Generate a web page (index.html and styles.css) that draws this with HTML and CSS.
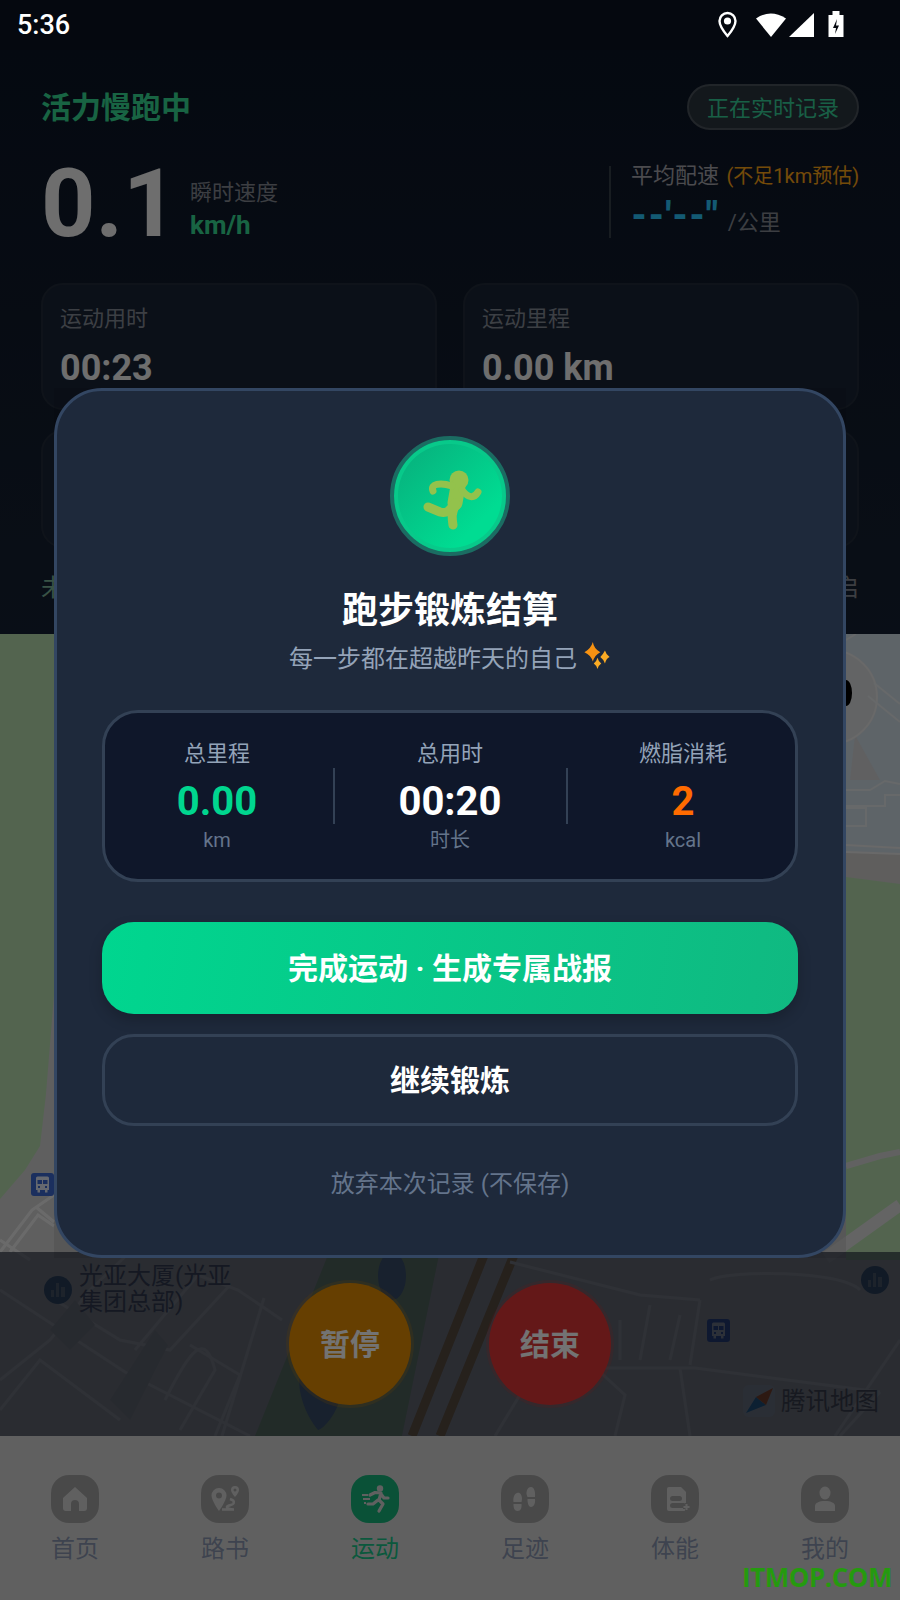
FILE: index.html
```html
<!DOCTYPE html>
<html lang="zh-CN">
<head>
    <meta charset="UTF-8">
    <meta name="viewport" content="width=device-width, initial-scale=1.0">
    <title>跑步锻炼结算</title>
    <link rel="stylesheet" href="styles.css">
</head>
<body>
    <div class="screen">
        <div class="status-bar">
            <span class="status-time">5:36</span>
            <svg class="status-icons" width="140" height="30" viewBox="0 0 140 30">
                <path d="M9.5 3a8 8 0 0 0-8 8c0 5.500 8 15 8 15s8-9.500 8-15a8 8 0 0 0-8-8z" fill="none" stroke="#fff" stroke-width="2.400"/>
                <circle cx="9.500" cy="11" r="3.600" fill="#fff"/>
                <path d="M38 8.500Q52.500-1.500 68 8.500L53 27z" fill="#fff"/>
                <path d="M96 3V27H71z" fill="#fff"/>
                <path d="M110.500 5h4V1h7v4h4v22h-15z" fill="#fff"/>
                <path d="M119 9l-4 9h3l-1 6 4-8.500h-3z" fill="#05080f"/>
            </svg>
        </div>

        <section class="panel">
            <div class="panel-head">
                <h1 class="panel-title">活力慢跑中</h1>
                <span class="live-pill">正在实时记录</span>
            </div>
            <div class="metrics">
                <span class="speed-value">0.1</span>
                <div class="speed-meta">
                    <span class="speed-label">瞬时速度</span>
                    <span class="speed-unit">km/h</span>
                </div>
                <div class="pace">
                    <div class="pace-label">平均配速 <span class="pace-note">(不足1km预估)</span></div>
                    <div class="pace-row"><span class="pace-value">--'--"</span><span class="pace-unit">/公里</span></div>
                </div>
            </div>
            <div class="cards">
                <div class="card">
                    <span class="card-label">运动用时</span>
                    <span class="card-value">00:23</span>
                </div>
                <div class="card">
                    <span class="card-label">运动里程</span>
                    <span class="card-value">0.00 km</span>
                </div>
                <div class="card"></div>
                <div class="card"></div>
            </div>
            <div class="panel-foot">
                <span class="foot-left">未</span>
                <span class="foot-right">启</span>
            </div>
        </section>

        <section class="map">
            <svg class="map-canvas" width="900" height="802" viewBox="0 634 900 802">
                <defs>
                    <g id="bus-stop">
                        <rect width="23" height="23" rx="3" fill="#3c68d0"/>
                        <path d="M5 5a1.500 1.500 0 0 1 1.500-1.500h10A1.500 1.500 0 0 1 18 5V17H16.500V19.500H14V17H9V19.500H6.500V17H5Z" fill="#dfe7f7"/>
                        <rect x="6.500" y="7" width="4.500" height="4" fill="#3c68d0"/>
                        <rect x="12" y="7" width="4.500" height="4" fill="#3c68d0"/>
                        <rect x="7" y="13" width="2" height="2" fill="#3c68d0"/>
                        <rect x="14" y="13" width="2" height="2" fill="#3c68d0"/>
                    </g>
                    <g id="poi">
                        <circle r="14" fill="#4a6f98"/>
                        <path d="M-7 7V0h3v7zM-2 7V-7h3V7zM3 7V-3h4V7z" fill="#8fa0b2"/>
                    </g>
                </defs>
                <rect x="0" y="634" width="900" height="802" fill="#d3d3d3"/>
                <path d="M0 634H54V995L46 1094L40 1146L25 1170L0 1199Z" fill="#b8deb0"/>
                <path d="M846 634H900V853H846Z" fill="#d1dde6"/>
                <path d="M846 853H900V884L846 877Z" fill="#d2d0ce"/>
                <path d="M846 877L900 884V1260H846Z" fill="#b8deb0"/>
                <path d="M855 735L880 780H850Z" fill="#d4d6d8"/>
                <circle cx="830" cy="697" r="47" fill="#dcdee0" stroke="#e8e8e8" stroke-width="2"/>
                <ellipse cx="846" cy="693" rx="6" ry="13" fill="#000"/>
                <g fill="none" stroke="#e4e8ea" stroke-width="2">
                    <path d="M874 683L900 704M868 696L900 722"/>
                    <path d="M846 790L870 790L885 781L900 784"/>
                    <path d="M846 806H885V795H900"/>
                    <path d="M846 808H866V826H846"/>
                    <path d="M846 640L856 634"/>
                </g>
                <path d="M846 845L900 848M846 852L900 854" fill="none" stroke="#e8e8e8" stroke-width="2"/>
                <path d="M846 1166L880 1156L900 1152" fill="none" stroke="#d8d8d8" stroke-width="6"/>
                <path d="M826 1258L900 1205" fill="none" stroke="#dedede" stroke-width="12"/>

                <g fill="none" stroke="#ececec" stroke-width="3">
                    <path d="M0 1252L32 1210L54 1195"/>
                    <path d="M36 1207L54 1222"/>
                    <path d="M10 1252L38 1215L54 1226"/>
                    <path d="M0 1240L30 1260"/>
                </g>

                <path d="M330 1250H440L402 1436H255Z" fill="#a9cba2"/>
                <ellipse cx="392" cy="1276" rx="14" ry="24" fill="#6f97c0"/>
                <path d="M300 1372C312 1356 322 1382 340 1398C336 1416 322 1430 318 1430C308 1418 296 1394 300 1372Z" fill="#6f97c0"/>
                <path d="M486 1250L412 1436M516 1250L440 1436" fill="none" stroke="#bd9560" stroke-width="9"/>

                <g fill="none" stroke="#eeeeee" stroke-width="3">
                    <path d="M0 1290L125 1372L250 1436"/>
                    <path d="M0 1380L50 1340L90 1290L130 1252"/>
                    <path d="M135 1350L198 1275L238 1290L282 1320"/>
                    <path d="M55 1300L120 1340L170 1350L230 1285"/>
                    <path d="M0 1410L40 1360L120 1420"/>
                    <path d="M190 1345L240 1375L215 1436"/>
                    <path d="M165 1400C190 1350 205 1330 215 1370L180 1430"/>
                    <path d="M264 1298L222 1436"/>
                    <path d="M510 1262L640 1295L700 1300"/>
                    <path d="M700 1300L690 1365"/>
                    <path d="M620 1320L620 1360M650 1305L640 1360M680 1315L670 1360"/>
                    <path d="M600 1368L695 1368L880 1392"/>
                    <path d="M680 1368L690 1436"/>
                    <path d="M495 1436L535 1370L600 1372L625 1395L615 1436"/>
                    <path d="M880 1392L840 1436"/>
                    <path d="M900 1340L835 1436"/>
                    <path d="M710 1280C730 1270 840 1270 860 1290"/>
                </g>
                <g fill="#c6c6c6">
                    <path d="M50 1330L75 1300L95 1325L70 1350Z"/>
                    <path d="M110 1400L155 1330L168 1345L130 1420Z"/>
                </g>

                <use href="#bus-stop" x="31" y="1173"/>
                <use href="#bus-stop" x="707" y="1319"/>
                <use href="#poi" x="58" y="1290"/>
                <use href="#poi" x="875" y="1280"/>
                <text class="map-label" x="79" y="1284">光亚大厦(光亚</text>
                <text class="map-label" x="79" y="1310">集团总部)</text>

                <rect x="743" y="1385" width="32" height="32" rx="6" fill="#d4dee8"/>
                <path d="M746 1413L756 1397L766 1405Z" fill="#2f8fd8"/>
                <path d="M756 1397L773 1388L766 1405Z" fill="#e4692a"/>
                <text class="map-brand" x="781" y="1410">腾讯地图</text>
            </svg>
            <div class="controls">
                <button class="round-btn pause-btn">暂停</button>
                <button class="round-btn stop-btn">结束</button>
            </div>
        </section>

        <nav class="tabbar">
            <a class="tab">
                <svg class="tab-icon" width="48" height="48" viewBox="0 0 48 48">
                    <path d="M24 12L36 23V33a3 3 0 0 1-3 3H28V29a4 4 0 0 0-8 0V36H15a3 3 0 0 1-3-3V23Z" class="glyph"/>
                </svg>
                <span>首页</span>
            </a>
            <a class="tab">
                <svg class="tab-icon" width="48" height="48" viewBox="0 0 48 48">
                    <path fill-rule="evenodd" d="M18 13a7.500 7.500 0 0 0-7.500 7.500c0 5 7.500 15.500 7.500 15.500s7.500-10.500 7.500-15.500A7.500 7.500 0 0 0 18 13zm0 4.500a3 3 0 1 1 0 6 3 3 0 0 1 0-6z" class="glyph"/>
                    <path fill-rule="evenodd" d="M34 11a4 4 0 0 0-4 4c0 2.500 4 7 4 7s4-4.500 4-7a4 4 0 0 0-4-4zm0 2.500a1.500 1.500 0 1 1 0 3 1.500 1.500 0 0 1 0-3z" class="glyph"/>
                    <path d="M29 24c3 1 4.500 2 3.500 4.500-1 2-6.500 1.500-6.500 3.500 0 1.500 3 2.500 7 2.500H21" fill="none" class="glyph-line" stroke-width="2.600"/>
                </svg>
                <span>路书</span>
            </a>
            <a class="tab active">
                <svg class="tab-icon" width="48" height="48" viewBox="0 0 48 48">
                    <circle cx="29" cy="13.500" r="3.200" class="glyph"/>
                    <path d="M19 20L24 17.500L30 18L28 25L32 29L28 36M30 19L33 23H37M27 25L22 29H17" fill="none" class="glyph-line" stroke-width="3.200" stroke-linecap="round" stroke-linejoin="round"/>
                    <path d="M11 20H17M12 24H19M13 28H15" fill="none" class="glyph-line" stroke-width="1.800"/>
                </svg>
                <span>运动</span>
            </a>
            <a class="tab">
                <svg class="tab-icon" width="48" height="48" viewBox="0 0 48 48">
                    <path d="M16 18c3-1 5 2 5 6l-.5 3h-8C12 23 13 19 16 18zM12.500 29h8c.3 4-.5 7-4 7s-4-4-4-7z" class="glyph"/>
                    <path d="M30 12c-3 0-4.500 3-4.500 7l1 3h7.500c.5-4-.5-10-4-10zM26.500 24l7.500 0c.5 4-1 8-4 8-2.500 0-3.500-4-3.500-8z" class="glyph"/>
                </svg>
                <span>足迹</span>
            </a>
            <a class="tab">
                <svg class="tab-icon" width="48" height="48" viewBox="0 0 48 48">
                    <path d="M16 14a2 2 0 0 1 2-2H30l5 5V34a2 2 0 0 1-2 2H18a2 2 0 0 1-2-2Z" class="glyph"/>
                    <rect x="19" y="21" width="12" height="5" rx="2.500" class="glyph-hole"/>
                    <rect x="19" y="28" width="16" height="5" rx="2.500" class="glyph-hole"/>
                    <path d="M32 32H40M36 28V36" class="glyph-cut" stroke-width="4"/>
                    <path d="M32.500 32H38.500M35.500 29V35" class="glyph-line" stroke-width="2"/>
                </svg>
                <span>体能</span>
            </a>
            <a class="tab">
                <svg class="tab-icon" width="48" height="48" viewBox="0 0 48 48">
                    <ellipse cx="24" cy="18" rx="5.500" ry="6.500" class="glyph"/>
                    <path d="M14 36V31c0-3 4-5 10-5s10 2 10 5v5Z" class="glyph"/>
                </svg>
                <span>我的</span>
            </a>
        </nav>

        <div class="scrim"></div>

        <div class="sheet">
            <div class="dialog">
                <div class="dialog-badge">
                    <svg width="112" height="112" viewBox="394 440 112 112">
                        <circle cx="459" cy="480" r="9.500" fill="#93c24c"/>
                        <path d="M458 486L455 503" stroke="#93c24c" stroke-width="15" stroke-linecap="round"/>
                        <path d="M433 491C430 484 440 482 452 486M462 490C468 498 474 499 478 492" fill="none" stroke="#93c24c" stroke-width="7" stroke-linecap="round"/>
                        <path d="M455 503C450 511 446 514 440 512L428 507M456 504C451 514 452 518 453 525" fill="none" stroke="#93c24c" stroke-width="9" stroke-linecap="round"/>
                    </svg>
                </div>
                <h2 class="dialog-title">跑步锻炼结算</h2>
                <p class="dialog-sub">每一步都在超越昨天的自己
                    <svg class="sparkle" width="27" height="28" viewBox="0 0 28 30">
                        <path d="M9 0Q10 7 17 11Q11 14 9 21Q7 14 0 11Q7 7 9 0Z" fill="#f79212"/>
                        <path d="M22 9Q23 13 27 16Q23 18 22 23Q20 18 17 16Q20 13 22 9Z" fill="#fbab24"/>
                        <path d="M14 17Q15 21 18 23Q15 25 14 29Q13 25 10 23Q13 21 14 17Z" fill="#fbab24"/>
                    </svg>
                </p>
                <div class="stats">
                    <div class="stat">
                        <span class="stat-label">总里程</span>
                        <span class="stat-value green">0.00</span>
                        <span class="stat-unit">km</span>
                    </div>
                    <i class="stat-line"></i>
                    <div class="stat">
                        <span class="stat-label">总用时</span>
                        <span class="stat-value">00:20</span>
                        <span class="stat-unit">时长</span>
                    </div>
                    <i class="stat-line"></i>
                    <div class="stat">
                        <span class="stat-label">燃脂消耗</span>
                        <span class="stat-value orange">2</span>
                        <span class="stat-unit">kcal</span>
                    </div>
                </div>
                <button class="btn-primary">完成运动 · 生成专属战报</button>
                <button class="btn-outline">继续锻炼</button>
                <button class="btn-ghost">放弃本次记录 (不保存)</button>
            </div>
        </div>

        <div class="watermark">ITMOP.COM</div>
    </div>
</body>
</html>
```

FILE: styles.css
```css
* {
    box-sizing: border-box;
}
body {
    margin: 0;
    font-family: Roboto, "Noto Sans CJK SC", sans-serif;
    background-color: #000;
    color: #fff;
}
h1, h2, p {
    margin: 0;
}
button {
    font-family: inherit;
    border: none;
    padding: 0;
    color: #fff;
    background: none;
}
.screen {
    position: relative;
    width: 900px;
    height: 1600px;
    overflow: hidden;
    display: flex;
    flex-direction: column;
}

/* status bar sits above the scrim */
.status-bar {
    position: relative;
    z-index: 3;
    flex: none;
    height: 50px;
    padding: 0 42px 0 17px;
    display: flex;
    justify-content: space-between;
    align-items: center;
    background: #05080f;
}
.status-time {
    font-size: 27px;
    font-weight: 500;
}

/* top panel */
.panel {
    flex: none;
    height: 584px;
    padding: 34px 41px 0;
    background: linear-gradient(180deg, #0c1626, #162133);
}
.panel-head {
    display: flex;
    justify-content: space-between;
    align-items: center;
}
.panel-title {
    padding-top: 2px;
    font-size: 30px;
    line-height: 44px;
    font-weight: 700;
    color: #37de96;
}
.live-pill {
    width: 172px;
    height: 46px;
    display: flex;
    justify-content: center;
    align-items: center;
    padding-bottom: 2px;
    font-size: 22px;
    color: #37d39b;
    background: #2c353e;
    border: 2px solid #4a535c;
    border-radius: 23px;
}
.metrics {
    margin-top: 30px;
    height: 80px;
    display: flex;
    align-items: center;
}
.speed-value {
    font-size: 95px;
    line-height: 80px;
    padding-top: 8px;
    font-weight: 700;
    width: 149px;
    color: #f4f4f4;
}
.speed-meta {
    display: flex;
    flex-direction: column;
    padding-top: 18px;
}
.speed-label {
    font-size: 22px;
    line-height: 32px;
    color: #858a93;
}
.speed-unit {
    font-size: 26px;
    line-height: 32px;
    font-weight: 700;
    color: #37de96;
}
.pace {
    margin-left: auto;
    margin-top: 4px;
    width: 250px;
    height: 72px;
    padding-left: 20px;
    border-left: 2px solid #374049;
}
.pace-label {
    margin-top: -3px;
    font-size: 22px;
    line-height: 26px;
    color: #a6a6ad;
    white-space: nowrap;
}
.pace-note {
    margin-left: 2px;
    font-size: 20px;
    color: #ffa616;
}
.pace-row {
    display: flex;
    align-items: flex-end;
    gap: 9px;
    margin-top: 8px;
}
.pace-value {
    margin-bottom: 2px;
    font-size: 36px;
    line-height: 38px;
    font-weight: 900;
    letter-spacing: 1px;
    color: #2cc8ff;
}
.pace-unit {
    font-size: 22px;
    line-height: 28px;
    color: #858a93;
}
.cards {
    margin-top: 43px;
    display: grid;
    grid-template-columns: 396px 396px;
    grid-template-rows: 127px 118px;
    gap: 20px 26px;
}
.card {
    padding: 18px 17px 0;
    display: flex;
    flex-direction: column;
    background: #1a2436;
    border: 2px solid #222c3a;
    border-radius: 22px;
}
.card-label {
    font-size: 22px;
    line-height: 32px;
    color: #868c97;
}
.card-value {
    margin-top: 11px;
    font-size: 36px;
    line-height: 44px;
    font-weight: 700;
    color: #f4f4f4;
}
.panel-foot {
    margin-top: 23px;
    display: flex;
    justify-content: space-between;
    font-size: 24px;
    line-height: 34px;
}
.foot-left {
    color: #7fb69a;
}
.foot-right {
    color: #858a93;
}

/* map with the run controls */
.map {
    position: relative;
    flex: none;
    height: 802px;
    overflow: hidden;
}
.map-canvas {
    display: block;
}
.map-label {
    font-size: 24px;
    fill: #5f6880;
}
.map-brand {
    font-size: 24.500px;
    fill: #6c6c74;
}
.controls {
    position: absolute;
    left: 0;
    right: 0;
    bottom: 0;
    height: 184px;
    padding: 31px 0 0 289px;
    display: flex;
    gap: 78px;
    background: rgba(15, 23, 42, 0.6);
}
.round-btn {
    width: 122px;
    height: 122px;
    padding-bottom: 4px;
    border-radius: 50%;
    font-size: 30px;
    font-weight: 700;
}
.pause-btn {
    background: #e28c04;
    box-shadow: 0 0 0 3px rgba(226, 140, 4, 0.2);
}
.stop-btn {
    background: #de3737;
    box-shadow: 0 0 0 3px rgba(222, 55, 55, 0.2);
}

/* bottom tabs */
.tabbar {
    flex: none;
    height: 164px;
    padding-top: 39px;
    display: grid;
    grid-template-columns: repeat(6, 150px);
    align-items: start;
    background: #d6d6d6;
}
.tab {
    display: flex;
    flex-direction: column;
    align-items: center;
    font-size: 24px;
    line-height: 28px;
    color: #8a96b0;
}
.tab span {
    margin-top: 12px;
}
.tab-icon {
    display: block;
    background: #a3a3a3;
    border-radius: 18px;
}
.glyph {
    fill: #d6d6d6;
}
.glyph-line {
    stroke: #d6d6d6;
}
.glyph-hole {
    fill: #a3a3a3;
}
.glyph-cut {
    stroke: #a3a3a3;
}
.tab.active {
    color: #19c488;
}
.tab.active .tab-icon {
    background: #18b47a;
}

/* modal */
.scrim {
    position: absolute;
    inset: 0;
    z-index: 1;
    background: rgba(0, 0, 0, 0.55);
}
.sheet {
    position: absolute;
    z-index: 2;
    left: 54px;
    top: 388px;
    width: 792px;
    height: 870px;
    background: rgba(0, 0, 0, 0.08);
}
.dialog {
    height: 100%;
    padding: 45px 45px 0;
    display: flex;
    flex-direction: column;
    align-items: center;
    background: #1e293b;
    border: 3px solid #334662;
    border-radius: 48px;
}
.dialog-badge {
    flex: none;
    width: 120px;
    height: 120px;
    background: linear-gradient(135deg, #08ab7a, #00dc92 75%);
    border: 4px solid #1b6c62;
    border-radius: 50%;
    box-shadow: inset 0 0 0 4px #08c98a;
}
.dialog-title {
    margin-top: 30px;
    font-size: 36px;
    line-height: 50px;
    font-weight: 700;
}
.dialog-sub {
    margin-top: 2px;
    height: 36px;
    display: flex;
    align-items: center;
    gap: 7px;
    font-size: 24px;
    color: #94a3b8;
}
.stats {
    margin-top: 36px;
    flex: none;
    width: 100%;
    height: 172px;
    display: flex;
    justify-content: center;
    align-items: center;
    background: #0f172a;
    border: 3px solid #334155;
    border-radius: 36px;
}
.stat {
    flex: none;
    width: 231px;
    display: flex;
    flex-direction: column;
    align-items: center;
}
.stat-line {
    flex: none;
    width: 2px;
    height: 56px;
    background: #334155;
}
.stat-label {
    font-size: 22px;
    line-height: 32px;
    color: #94a3b8;
}
.stat-value {
    margin-top: 8px;
    font-size: 40px;
    line-height: 48px;
    font-weight: 700;
}
.stat-unit {
    font-size: 20px;
    line-height: 28px;
    color: #64748b;
}
.green {
    color: #00d68f;
}
.orange {
    color: #ff6b00;
}
.btn-primary {
    flex: none;
    margin-top: 40px;
    width: 100%;
    height: 92px;
    padding-bottom: 4px;
    font-size: 30px;
    font-weight: 700;
    background: linear-gradient(100deg, #00d68f, #10b981);
    border-radius: 32px;
    box-shadow: 0 6px 14px rgba(0, 0, 0, 0.2);
}
.btn-outline {
    flex: none;
    margin-top: 20px;
    width: 100%;
    height: 92px;
    padding-bottom: 4px;
    font-size: 30px;
    font-weight: 700;
    border: 3px solid #334155;
    border-radius: 32px;
}
.btn-ghost {
    margin-top: 38px;
    font-size: 24px;
    line-height: 40px;
    color: #64748b;
}
.watermark {
    position: absolute;
    z-index: 3;
    right: 8px;
    bottom: 11px;
    font-family: "Open Sans", sans-serif;
    font-size: 26px;
    line-height: 24px;
    font-weight: 700;
    letter-spacing: -0.5px;
    color: #259a0f;
}
```
